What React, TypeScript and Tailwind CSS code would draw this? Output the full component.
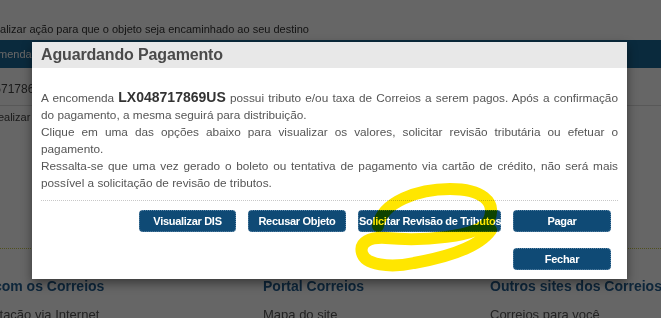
import React from 'react';

const buttons = [
  { label: 'Visualizar DIS', w: 'w-[97px]' },
  { label: 'Recusar Objeto', w: 'w-[98px]' },
  { label: 'Solicitar Revisão de Tributos', w: 'w-[143px]' },
  { label: 'Pagar', w: 'w-[98px]' },
];

const Btn = ({ label, w }: { label: string; w: string }) => (
  <button
    className={
      'h-[22px] whitespace-nowrap rounded-[4px] border border-dotted border-[#5b86a8] bg-[#0f4a75] text-[11px] font-bold tracking-[-0.3px] text-white ' +
      w
    }
  >
    {label}
  </button>
);

const App = () => {
  return (
    <div className="relative h-[318px] w-[661px] overflow-hidden bg-white font-['Liberation_Sans',Arial,sans-serif]">
      {/* página por trás */}
      <div className="flex flex-col">
        <div className="h-[22px]" />
        <p className="-ml-[14px] text-[11px] leading-[14px] text-[#333]">
          Realizar ação para que o objeto seja encaminhado ao seu destino
        </p>
        <div className="h-[4px]" />
        <div className="flex h-[28px] items-center bg-[#1b6998] text-[11px] text-white">
          <span className="-ml-[27px]">Encomenda</span>
        </div>
        <div className="flex h-[38px] items-center border-b border-[#ddd] pt-[4px] text-[12px] text-[#444]">
          <span className="-ml-[27px]">LX0571786</span>
        </div>
        <div className="flex h-[22px] items-center text-[11px] text-[#444]">
          <span className="-ml-[10px]">Realizar ação</span>
        </div>
        <div className="h-[120px]" />
        <div className="border-t border-dotted border-[#c8c84a]" />
        <div className="grid grid-cols-[263px_227px_1fr] pt-[28px] text-[14px] font-bold leading-[18px] text-[#235f92]">
          <span className="-ml-[38px] whitespace-nowrap">Fale com os Correios</span>
          <span>Portal Correios</span>
          <span className="whitespace-nowrap">Outros sites dos Correios</span>
        </div>
        <div className="grid grid-cols-[263px_227px_1fr] pt-[10px] text-[13px] text-[#555]">
          <span className="-ml-[46px] whitespace-nowrap">Manifestação via Internet</span>
          <span>Mapa do site</span>
          <span>Correios para você</span>
        </div>
      </div>

      {/* overlay */}
      <div className="absolute inset-0 bg-black/60" />

      {/* modal */}
      <div className="absolute left-[32px] top-[42px] w-[595px] bg-white shadow-[0_4px_10px_rgba(0,0,0,0.45)]">
        <div className="flex h-[26px] items-center bg-[#e8e8e8] px-[9px] text-[16px] font-bold tracking-[-0.15px] text-[#4a4a4a]">
          Aguardando Pagamento
        </div>
        <div className="px-[9px] pt-[21px] text-justify text-[11.8px] leading-[17px] text-[#555]">
          <p>
            A encomenda{' '}
            <span className="text-[14px] font-bold text-[#333]">LX048717869US</span> possui tributo e/ou taxa de
            Correios a serem pagos. Após a confirmação do pagamento, a mesma seguirá para distribuição.
            <br />
            Clique em uma das opções abaixo para visualizar os valores, solicitar revisão tributária ou efetuar o
            pagamento.
            <br />
            Ressalta-se que uma vez gerado o boleto ou tentativa de pagamento via cartão de crédito, não será mais
            possível a solicitação de revisão de tributos.
          </p>
          <div className="mt-[8px] border-t border-dotted border-[#c8c8c8]" />
        </div>
        <div className="flex flex-col items-end gap-[16px] px-[16px] pb-[9px] pt-[9px]">
          <div className="flex gap-[12px]">
            {buttons.map((b) => (
              <Btn key={b.label} label={b.label} w={b.w} />
            ))}
          </div>
          <Btn label="Fechar" w="w-[98px]" />
        </div>
      </div>

      {/* rabisco amarelo */}
      <svg className="pointer-events-none absolute left-0 top-0 mix-blend-multiply" width="661" height="318">
        <path
          d="M 378 226 C 382 202, 418 189, 450 189 C 481 189, 497 201, 489 220 C 479 238, 420 241, 386 238 C 370 237, 359 242, 362 253 C 365 265, 390 268, 414 263 C 448 257, 479 247, 491 230"
          fill="none"
          stroke="#ffe600"
          strokeWidth="12"
          strokeLinecap="round"
          strokeLinejoin="round"
        />
      </svg>
    </div>
  );
};

export default App;
